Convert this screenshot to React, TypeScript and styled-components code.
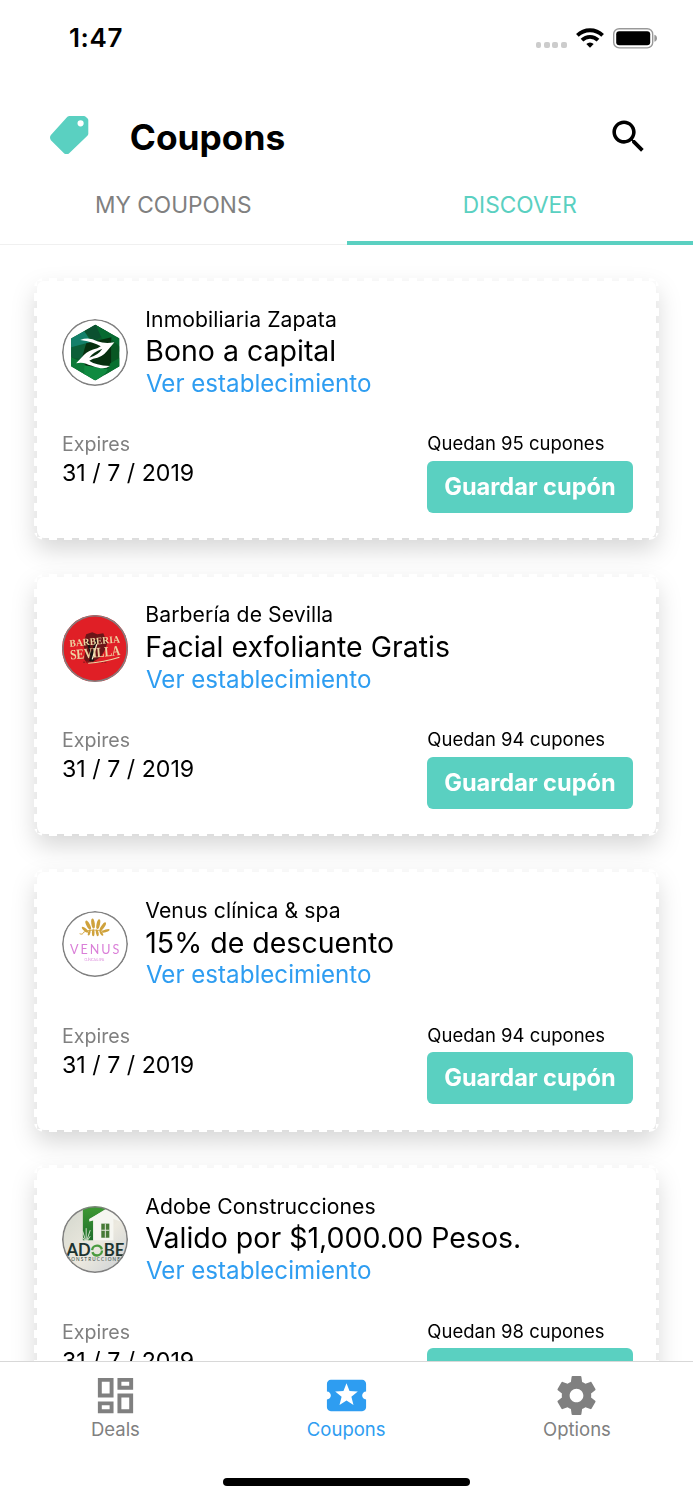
import React from "react";
import styled, { createGlobalStyle } from "styled-components";

const teal = "#5ad0c1";
const blue = "#2e9df1";
const gray = "#808080";

function App() {
  return (
    <Screen>
      <GlobalStyle />
      {/* status bar */}
      <StatusBar>
        <Clock>1:47</Clock>
        <StatusIcons>
          <Signal>
            <Dot />
            <Dot />
            <Dot />
            <Dot />
          </Signal>
          <WifiIcon />
          <BatteryIcon />
        </StatusIcons>
      </StatusBar>

      {/* header */}
      <Header>
        <TagIcon />
        <Title>Coupons</Title>
        <SearchButton>
          <SearchIcon />
        </SearchButton>
      </Header>
      <Tabs>
        <Tab>MY COUPONS</Tab>
        <Tab $active>DISCOVER</Tab>
      </Tabs>

      {/* coupons */}
      <List>
        {coupons.map((coupon) => (
          <Card key={coupon.business}>
            <CardTop>
              <Logo>{coupon.logo}</Logo>
              <div>
                <Business>{coupon.business}</Business>
                <Offer>{coupon.offer}</Offer>
                <Link>Ver establecimiento</Link>
              </div>
            </CardTop>
            <CardBottom>
              <div>
                <ExpiresLabel>Expires</ExpiresLabel>
                <ExpiresDate>31 / 7 / 2019</ExpiresDate>
              </div>
              <div>
                <Remaining>Quedan {coupon.left} cupones</Remaining>
                <SaveButton>Guardar cupón</SaveButton>
              </div>
            </CardBottom>
          </Card>
        ))}
      </List>

      {/* bottom navigation */}
      <BottomBar>
        <BottomNav>
          <NavItem>
            <NavIcon d="M19 5v2h-4V5h4M9 5v6H5V5h4m10 8v6h-4v-6h4M9 17v2H5v-2h4M21 3h-8v6h8V3zM11 3H3v10h8V3zm10 8h-8v10h8V11zm-10 4H3v6h8v-6z" />
            <NavLabel>Deals</NavLabel>
          </NavItem>
          <NavItem $active>
            <NavIcon d="M20 12c0-1.1.9-2 2-2V6c0-1.1-.9-2-2-2H4c-1.1 0-1.99.9-1.99 2v4c1.1 0 1.99.9 1.99 2s-.89 2-2 2v4c0 1.1.9 2 2 2h16c1.1 0 2-.9 2-2v-4c-1.1 0-2-.9-2-2zm-4.42 4.8L12 14.5l-3.58 2.3 1.08-4.12-3.29-2.69 4.24-.25L12 5.8l1.54 3.95 4.24.25-3.29 2.69 1.09 4.11z" />
            <NavLabel>Coupons</NavLabel>
          </NavItem>
          <NavItem>
            <NavIcon d="M19.43 12.98c.04-.32.07-.64.07-.98s-.03-.66-.07-.98l2.11-1.65c.19-.15.24-.42.12-.64l-2-3.46c-.12-.22-.39-.3-.61-.22l-2.49 1c-.52-.4-1.08-.73-1.69-.98l-.38-2.65C14.46 2.18 14.25 2 14 2h-4c-.25 0-.46.18-.49.42l-.38 2.65c-.61.25-1.17.59-1.69.98l-2.49-1c-.23-.09-.49 0-.61.22l-2 3.46c-.13.22-.07.49.12.64l2.11 1.65c-.04.32-.07.65-.07.98s.03.66.07.98l-2.11 1.65c-.19.15-.24.42-.12.64l2 3.46c.12.22.39.3.61.22l2.49-1c.52.4 1.08.73 1.69.98l.38 2.65c.03.24.24.42.49.42h4c.25 0 .46-.18.49-.42l.38-2.65c.61-.25 1.17-.59 1.69-.98l2.49 1c.23.09.49 0 .61-.22l2-3.46c.12-.22.07-.49-.12-.64l-2.11-1.65zM12 15.5c-1.93 0-3.5-1.57-3.5-3.5s1.57-3.5 3.5-3.5 3.5 1.57 3.5 3.5-1.57 3.5-3.5 3.5z" />
            <NavLabel>Options</NavLabel>
          </NavItem>
        </BottomNav>
        <HomeIndicator />
      </BottomBar>
    </Screen>
  );
}

export default App;

/* icons */

function WifiIcon() {
  return (
    <svg width="28" height="20" viewBox="0 0 28 20">
      <g fill="none" stroke="#000" strokeWidth="3.8">
        <path d="M1.4 7.4a18 18 0 0 1 25.2 0" />
        <path d="M6 12.1a11.4 11.4 0 0 1 16 0" />
      </g>
      <path d="M14 19.8l-3.7-3.9a5.3 5.3 0 0 1 7.4 0z" />
    </svg>
  );
}

function BatteryIcon() {
  return (
    <svg width="45" height="21" viewBox="0 0 45 21">
      <rect
        x="0.7"
        y="0.7"
        width="39"
        height="19.2"
        rx="5.5"
        fill="none"
        stroke="#999"
        strokeWidth="1.4"
      />
      <rect x="3.2" y="3.3" width="34" height="14" rx="3" />
      <path d="M41.4 6.8c1.6.5 2.6 1.8 2.6 3.5s-1 3-2.6 3.5z" fill="#999" />
    </svg>
  );
}

function TagIcon() {
  return (
    <TagSvg viewBox="0 0 38.3 38.3">
      <path
        fillRule="evenodd"
        fill={teal}
        d="M17.4.8Q18.3 0 19.6 0H34q1 0 1.7.7L37.6 2.6q.7.7.7 1.7V17.8q0 1.2-.9 2L19.2 37.3q-2.6 2-5.2 0L.9 24.2q-1.8-2.6 0-5.2zM30.6 4.2a3.1 3.1 0 1 0 0 6.2a3.1 3.1 0 1 0 0-6.2z"
      />
    </TagSvg>
  );
}

function SearchIcon() {
  return (
    <svg width="43" height="43" viewBox="0 0 24 24">
      <path d="M15.5 14h-.79l-.28-.27C15.41 12.59 16 11.11 16 9.5 16 5.91 13.09 3 9.5 3S3 5.91 3 9.5 5.91 16 9.5 16c1.61 0 3.09-.59 4.23-1.57l.27.28v.79l5 4.99L20.49 19l-4.99-5zm-6 0C7.01 14 5 11.99 5 9.5S7.01 5 9.5 5 14 7.01 14 9.5 11.99 14 9.5 14z" />
    </svg>
  );
}

function NavIcon({ d }: { d: string }) {
  return (
    <svg width="47" height="47" viewBox="0 0 24 24" fill="currentColor">
      <path d={d} />
    </svg>
  );
}

/* business logos */

function ZapataLogo() {
  return (
    <svg viewBox="0 0 66 66">
      <defs>
        <clipPath id="hex">
          <path d="M33 5.7L57 19.3V47L33 61L9 47V19.3z" />
        </clipPath>
      </defs>
      <g clipPath="url(#hex)">
        <rect width="66" height="66" fill="#0a5c2c" />
        <path d="M9 19L22 12L30 24L9 30z" fill="#14806a" />
        <path d="M22 12L33 5L46 13L32 22z" fill="#0b5030" />
        <path d="M33 5L58 19V33L40 20z" fill="#066a30" />
        <path d="M9 28L24 24L20 40L9 38z" fill="#0c5f38" />
        <path d="M24 24L49 18V48L26 52L20 38z" fill="#06300f" />
        <path d="M49 20L58 28V48L49 44z" fill="#085723" />
        <path d="M9 38L22 44L24 58L9 48z" fill="#0c7a38" />
        <path d="M22 46L48 50L33 62L22 56z" fill="#0f8a40" />
        <path d="M48 44L58 38V48L42 57z" fill="#08702f" />
      </g>
      <path
        fill="#fff"
        d="M18 20.8Q27 17.5 35 22Q43 25 52 23L44.5 32Q40 38 31 39.5L27 41.5Q33 46 47.5 46.7Q43 50 36 48.3Q28 46 24 44.3Q19 42.5 14 44L22 35.5Q26 31 35 29L38.5 27Q31 22.5 18 20.8z"
      />
      <path fill="#06300f" d="M27 38.5Q30 33.5 40 29.5Q36.5 35.5 27 38.5z" />
    </svg>
  );
}

function BarberiaLogo() {
  return (
    <svg viewBox="0 0 66 66">
      <rect width="66" height="66" fill="#e01f26" />
      <path
        d="M24 19l6-2 5 2 6-1 2 5 2 5-3 8-4 6-6 4-7 2-3-4 1-8-2-7z"
        fill="#6b1518"
      />
      <path d="M21 47h24" stroke="#a01a1e" strokeWidth="1.5" strokeDasharray="2 1" />
      <path d="M25 25l6 21M34 25l-6 21" stroke="#191312" strokeWidth="2.2" />
      <path d="M34.5 29l-4.5 15" stroke="#fff3d6" strokeWidth="1.2" />
      <g
        fill="#edd5a2"
        fontFamily="'Liberation Serif', serif"
        fontWeight="700"
        transform="rotate(-5 33 33)"
      >
        <text x="8" y="29.3" fontSize="10" textLength="50" lengthAdjust="spacingAndGlyphs">
          BARBERIA
        </text>
        <text x="7.5" y="42" fontSize="14" textLength="50" lengthAdjust="spacingAndGlyphs">
          SEVILLA
        </text>
      </g>
      <path d="M26 48q15-1 31-6" stroke="#edd5a2" strokeWidth="1" fill="none" />
    </svg>
  );
}

function VenusLogo() {
  return (
    <svg viewBox="0 0 66 66">
      <g fill="#cfa23c">
        <ellipse cx="22.8" cy="18.5" rx="1.4" ry="4" transform="rotate(-48 22.8 18.5)" />
        <ellipse cx="26" cy="14" rx="1.7" ry="5" transform="rotate(-28 26 14)" />
        <ellipse cx="30.8" cy="12.5" rx="1.7" ry="5" transform="rotate(-8 30.8 12.5)" />
        <ellipse cx="36" cy="13" rx="1.7" ry="5" transform="rotate(12 36 13)" />
        <ellipse cx="40.5" cy="15.5" rx="1.6" ry="5" transform="rotate(35 40.5 15.5)" />
        <ellipse cx="43.5" cy="19.7" rx="1.3" ry="4" transform="rotate(70 43.5 19.7)" />
        <ellipse cx="27" cy="21.5" rx="1.2" ry="3" transform="rotate(15 27 21.5)" />
        <ellipse cx="31" cy="21.5" rx="1.3" ry="3.5" />
        <ellipse cx="35" cy="21.7" rx="1.3" ry="3.3" transform="rotate(-12 35 21.7)" />
        <ellipse cx="39" cy="22" rx="1.2" ry="3" transform="rotate(-32 39 22)" />
      </g>
      <path d="M17.5 22.5q3 1.5 4-1.5q8-4 22-.5" stroke="#cfa23c" strokeWidth="0.9" fill="none" />
      <text x="8" y="42.5" fontSize="12.5" fill="#da7fd8" fontFamily="Lato, sans-serif" textLength="49">
        VENUS
      </text>
      <text x="22" y="50" fontSize="3.6" fill="#e3a3e3" fontFamily="Lato, sans-serif" textLength="20">
        CLÍNICA &amp; SPA
      </text>
    </svg>
  );
}

function AdobeLogo() {
  return (
    <svg viewBox="0 0 66 66">
      <defs>
        <linearGradient id="sky" x1="0" y1="0" x2="1" y2="1">
          <stop offset="0" stopColor="#d2d6cc" />
          <stop offset="0.55" stopColor="#ece9df" />
          <stop offset="1" stopColor="#c9ced3" />
        </linearGradient>
        <linearGradient id="leaf" x1="0" y1="0" x2="0" y2="1">
          <stop offset="0" stopColor="#3f9a33" />
          <stop offset="1" stopColor="#1f6f2c" />
        </linearGradient>
      </defs>
      <rect width="66" height="66" fill="url(#sky)" />
      <path d="M20.7 0H48L27 13.5L31 14V34H20.7z" fill="url(#leaf)" />
      <path d="M27 13L45 2.5L66 15V18L51 13V34H31V14.5L27 15.5z" fill="#f6f6f1" />
      <path d="M39 17.5h8v14h-8z" fill="#477a37" />
      <path d="M43 17.5v14M39 24h8" stroke="#e6eadf" strokeWidth="1" />
      <path
        d="M23.5 34.5L20.5 25M24 34.5V22M24.5 34.5L28 24M23 34.5L19.5 30M25 34.5L28 30"
        stroke="#dfe9d6"
        strokeWidth="0.9"
      />
      <g fill="#1d3430" fontFamily="Lato, sans-serif" fontWeight="700" fontSize="16">
        <text x="4.5" y="49.8" textLength="24" lengthAdjust="spacingAndGlyphs">
          AD
        </text>
        <text x="41.5" y="49.8" textLength="20.5" lengthAdjust="spacingAndGlyphs">
          BE
        </text>
      </g>
      <circle cx="34.8" cy="44.2" r="4.9" fill="none" stroke="#4a9b3f" strokeWidth="2.3" strokeDasharray="13.4 2" />
      <text x="5" y="54.9" fontSize="4.6" fill="#2e4641" fontFamily="Lato, sans-serif" textLength="56">
        CONSTRUCCIONES
      </text>
    </svg>
  );
}

const coupons = [
  {
    business: "Inmobiliaria Zapata",
    offer: "Bono a capital",
    left: 95,
    logo: <ZapataLogo />,
  },
  {
    business: "Barbería de Sevilla",
    offer: "Facial exfoliante Gratis",
    left: 94,
    logo: <BarberiaLogo />,
  },
  {
    business: "Venus clínica & spa",
    offer: "15% de descuento",
    left: 94,
    logo: <VenusLogo />,
  },
  {
    business: "Adobe Construcciones",
    offer: "Valido por $1,000.00 Pesos.",
    left: 98,
    logo: <AdobeLogo />,
  },
];

const GlobalStyle = createGlobalStyle`
  * {
    box-sizing: border-box;
  }
  body {
    margin: 0;
    background: #fff;
  }
  svg {
    display: block;
    flex-shrink: 0;
  }
  p, h1, h2 {
    margin: 0;
    font-weight: 400;
  }
`;

const Screen = styled.div`
  display: flex;
  flex-direction: column;
  width: 693px;
  height: 1500px;
  overflow: hidden;
  background: #fff;
  color: #000;
  font-family: "Inter", sans-serif;
  white-space: nowrap;
`;

const StatusBar = styled.div`
  display: flex;
  flex-shrink: 0;
  justify-content: space-between;
  align-items: center;
  height: 76px;
  padding: 0 35.5px 0 69px;
`;

const Clock = styled.p`
  margin-bottom: 1px;
  font-size: 26px;
  font-weight: 600;
  letter-spacing: 0.6px;
`;

const StatusIcons = styled.div`
  display: flex;
  align-items: center;
  gap: 9px;
`;

const Signal = styled.div`
  display: flex;
  gap: 2.7px;
  margin-top: 14px;
`;

const Dot = styled.span`
  width: 5.7px;
  height: 5.7px;
  border-radius: 2px;
  background: #ccc;
`;

const Header = styled.div`
  display: flex;
  flex-shrink: 0;
  align-items: center;
  height: 82px;
  margin-top: 20px;
  padding: 0 43px 0 50.3px;
`;

const TagSvg = styled.svg`
  width: 38.3px;
  height: 38.3px;
  margin-bottom: 4.5px;
`;

const Title = styled.h1`
  margin-left: 41.2px;
  font-size: 35.3px;
  font-weight: 700;
`;

const SearchButton = styled.div`
  margin-left: auto;
  margin-bottom: 1px;
`;

const Tabs = styled.div`
  display: flex;
  flex-shrink: 0;
  height: 67px;
  box-shadow: inset 0 -1px #f0f0f0;
`;

const Tab = styled.div<{ $active?: boolean }>`
  flex: 1;
  border-bottom: 4px solid ${(props) => (props.$active ? teal : "transparent")};
  color: ${(props) => (props.$active ? teal : gray)};
  font-size: 22.7px;
  line-height: 53px;
  text-align: center;
`;

const List = styled.div`
  display: flex;
  flex: 1;
  flex-direction: column;
  gap: 33.4px;
  min-height: 0;
  padding: 33px 33.7px 0;
  overflow: hidden;
`;

/* the perforated edge is drawn as repeating dashes under a transparent border */
const Card = styled.div`
  flex-shrink: 0;
  height: 262.3px;
  padding: 25.6px 23.7px 0 25.3px;
  border: 3px solid transparent;
  border-bottom-width: 2px;
  border-radius: 10px;
  background:
    linear-gradient(#fff, #fff) padding-box,
    repeating-linear-gradient(90deg, #fff 0 8px, transparent 8px 15px) 0 0 / 100% 3px no-repeat border-box,
    repeating-linear-gradient(90deg, #fff 0 8px, transparent 8px 15px) 0 100% / 100% 3px no-repeat border-box,
    repeating-linear-gradient(#fff 0 8px, transparent 8px 15px) 0 0 / 3px 100% no-repeat border-box,
    repeating-linear-gradient(#fff 0 8px, transparent 8px 15px) 100% 0 / 3px 100% no-repeat border-box;
  filter: drop-shadow(0 11px 11.5px rgba(0, 0, 0, 0.155));
`;

const CardTop = styled.div`
  display: flex;
  align-items: center;
  gap: 16.8px;
`;

const Logo = styled.div`
  position: relative;
  width: 66.5px;
  height: 66.5px;
  border-radius: 50%;
  overflow: hidden;

  &::after {
    content: "";
    position: absolute;
    inset: 0;
    border-radius: 50%;
    box-shadow: inset 0 0 0 1.6px ${gray};
  }
`;

const Business = styled.p`
  font-size: 21.2px;
  letter-spacing: 0.07px;
  line-height: 25.8px;
`;

const Offer = styled.h2`
  font-size: 28.5px;
  line-height: 37.6px;
`;

const Link = styled.p`
  padding-left: 0.6px;
  color: ${blue};
  font-size: 24.15px;
  line-height: 28.6px;
`;

const CardBottom = styled.div`
  display: flex;
  justify-content: space-between;
  margin-top: 32.9px;
`;

const ExpiresLabel = styled.p`
  color: ${gray};
  font-size: 19.6px;
  line-height: 26px;
`;

const ExpiresDate = styled.p`
  font-size: 23.2px;
  line-height: 33.4px;
`;

const Remaining = styled.p`
  margin-bottom: 5.5px;
  font-size: 18.5px;
  line-height: 24px;
`;

const SaveButton = styled.div`
  width: 205.3px;
  height: 52px;
  border-radius: 6px;
  background: ${teal};
  color: #fff;
  font-size: 23.6px;
  font-weight: 700;
  line-height: 51.5px;
  text-align: center;
`;

const BottomBar = styled.div`
  display: flex;
  flex-direction: column;
  flex-shrink: 0;
  align-items: center;
  justify-content: space-between;
  height: 139.5px;
  padding: 10.5px 0 13.7px;
  border-top: 1px solid #d8d8d8;
  background: #fff;
`;

const BottomNav = styled.div`
  display: flex;
  width: 100%;
  padding-right: 0.6px;
`;

const NavItem = styled.div<{ $active?: boolean }>`
  display: flex;
  flex: 1;
  flex-direction: column;
  align-items: center;
  color: ${(props) => (props.$active ? blue : gray)};
`;

const NavLabel = styled.span`
  margin-top: -2px;
  font-size: 18.5px;
  line-height: 24px;
`;

const HomeIndicator = styled.div`
  width: 247.6px;
  height: 8.5px;
  border-radius: 5px;
  background: #000;
`;
